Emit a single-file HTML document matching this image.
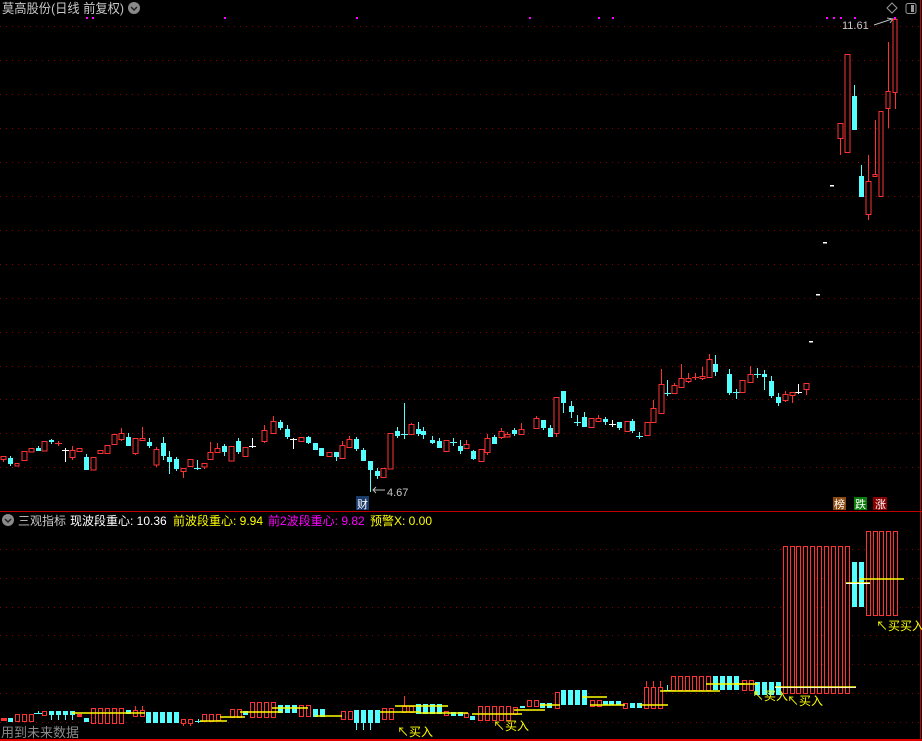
<!DOCTYPE html>
<html><head><meta charset="utf-8"><style>
html,body{margin:0;padding:0;background:#000;width:922px;height:741px;overflow:hidden}
svg{display:block}
text{font-family:"Liberation Sans","Noto Sans CJK SC",sans-serif}
.g{stroke:#8b0000;stroke-width:1;stroke-dasharray:1 5}
.R{fill:#000;stroke:#ff3232;stroke-width:1}
.RW{stroke:#ff3232;stroke-width:1;fill:none}
.C{fill:#54ffff}
.CW{stroke:#54ffff;stroke-width:1;fill:none}
.W{stroke:#fff;stroke-width:1;fill:none}
.Y{stroke:#ffff00;stroke-width:1.5}
</style></head><body>
<svg width="922" height="741" viewBox="0 0 922 741">
<g class="g">
<line x1="0" x2="920" y1="26.5" y2="26.5"/><line x1="0" x2="920" y1="60.5" y2="60.5"/><line x1="0" x2="920" y1="94.5" y2="94.5"/><line x1="0" x2="920" y1="128.5" y2="128.5"/><line x1="0" x2="920" y1="162.5" y2="162.5"/><line x1="0" x2="920" y1="196.5" y2="196.5"/><line x1="0" x2="920" y1="230.5" y2="230.5"/><line x1="0" x2="920" y1="264.5" y2="264.5"/><line x1="0" x2="920" y1="298.5" y2="298.5"/><line x1="0" x2="920" y1="332.5" y2="332.5"/><line x1="0" x2="920" y1="366.5" y2="366.5"/><line x1="0" x2="920" y1="399.5" y2="399.5"/><line x1="0" x2="920" y1="433.5" y2="433.5"/><line x1="0" x2="920" y1="467.5" y2="467.5"/>
<line x1="0" x2="920" y1="549.5" y2="549.5"/><line x1="0" x2="920" y1="578.5" y2="578.5"/><line x1="0" x2="920" y1="607.5" y2="607.5"/><line x1="0" x2="920" y1="635.5" y2="635.5"/><line x1="0" x2="920" y1="664.5" y2="664.5"/><line x1="0" x2="920" y1="693.5" y2="693.5"/><line x1="0" x2="920" y1="722.5" y2="722.5"/>
</g>
<line x1="0" x2="922" y1="511.5" y2="511.5" stroke="#c00000"/>
<line x1="0" x2="922" y1="740" y2="740" stroke="#e00000" stroke-width="2"/>
<line x1="920.5" x2="920.5" y1="0" y2="741" stroke="#c00000"/>

<text x="2" y="13" font-size="13" fill="#c8c8c8" textLength="122" lengthAdjust="spacingAndGlyphs">莫高股份(日线 前复权)</text>
<circle cx="134" cy="8" r="6" fill="#8a8a8a"/><path d="M131 7l3 3 3-3" stroke="#222" stroke-width="1.5" fill="none"/>
<g fill="#ff00ff"><rect x="86" y="17" width="2" height="2"/><rect x="92" y="17" width="2" height="2"/><rect x="224" y="17" width="2" height="2"/><rect x="356" y="17" width="2" height="2"/><rect x="529" y="17" width="2" height="2"/><rect x="598" y="17" width="2" height="2"/><rect x="612" y="17" width="2" height="2"/><rect x="826" y="17" width="2" height="2"/><rect x="833" y="17" width="2" height="2"/><rect x="840" y="17" width="2" height="2"/><rect x="854" y="17" width="2" height="2"/><rect x="894" y="17" width="2" height="2"/></g>
<path d="M892 3l5 5-5 5-5-5z" stroke="#999" fill="none"/>
<rect x="906" y="3.5" width="10" height="10" rx="2" stroke="#999" fill="none"/><rect x="911" y="5" width="3" height="7" fill="#999"/>
<text x="842" y="29" font-size="11" fill="#c8c8c8">11.61</text>
<path d="M874 25l18-6M887 18l6 1-3 4" stroke="#bbb" fill="none"/>

<path class="RW" d="M3.5 456V462M72.5 446V460M121.5 428V441M135.5 453V455M142.5 427V441M156.5 447V467M183.5 471V478M204.5 467V469M210.5 442V460M217.5 443V452M245.5 456V457M264.5 425V443M273.5 416V421M342.5 441V459M349.5 436V439M411.5 423V424M446.5 451V452M466.5 440V444M481.5 461V462M487.5 434V455M501.5 428V439M507.5 432V437M521.5 423V435M536.5 416V418M556.5 433V437M598.5 415V422M653.5 400V408M661.5 369V384M674.5 383V385M681.5 364V388M688.5 373V383M702.5 367V380M709.5 354V359M750.5 366V383M785.5 391V402M792.5 395V403M806.5 389V395M840.5 138V155M868.5 155V220M875.5 120V176M888.5 42V128M895.5 92V109M58.5 441V446M55 443.5H62M695.5 373V380M692 377.5H699"/>
<path class="CW" d="M10.5 456V466M38.5 446V451M51.5 439V444M86.5 454V457M128.5 433V446M149.5 438V448M163.5 437V460M169.5 451V474M176.5 457V471M197.5 460V470M194 468.5H201M224.5 444V456M238.5 438V454M280.5 420V430M287.5 425V439M308.5 436V444M336.5 452V461M356.5 437V451M363.5 448V461M370.5 461V492M377.5 468V479M397.5 427V438M404.5 403V439M401 434.5H408M418.5 422V436M423.5 427V439M432.5 436V444M439.5 438V448M453.5 438V446M450 442.5H457M460.5 440V454M473.5 450V460M494.5 435V444M514.5 428V436M543.5 420V430M550.5 425V437M563.5 391V413M571.5 401V418M577.5 415V426M574 422.5H581M584.5 412V427M605.5 417V425M619.5 422V430M632.5 419V433M639.5 432V439M636 436.5H643M667.5 380V396M664 393.5H671M715.5 355V376M729.5 369V395M736.5 389V399M733 392.5H740M757.5 368V378M754 374.5H761M764.5 370V390M771.5 376V398M778.5 393V406M854.5 85V96M861.5 165V176"/>
<path class="W" d="M65.5 448V462M62 450.5H69M252.5 438V448M249 446.5H256M293.5 438V449M290 439.5H297M612.5 420V427M609 424.5H616M798.5 384V394M795 392.5H802"/>
<g class="R">
<rect x="1" y="456.5" width="5" height="3"/><rect x="15" y="463.5" width="4" height="2.5"/><rect x="22" y="451.5" width="5" height="9"/><rect x="29" y="448.5" width="5" height="3.5"/><rect x="42" y="441.5" width="5" height="9.5"/><rect x="70" y="450.5" width="5" height="7"/><rect x="77" y="448.5" width="5" height="3"/><rect x="91" y="457.5" width="5" height="12.5"/><rect x="98" y="450.5" width="5" height="3"/><rect x="105" y="445.5" width="5" height="8"/><rect x="112" y="434.5" width="5" height="10"/><rect x="119" y="433.5" width="5" height="6"/><rect x="133" y="438.5" width="5" height="15"/><rect x="140" y="438.5" width="5" height="2"/><rect x="154" y="449.5" width="5" height="15.5"/><rect x="181" y="468.5" width="5" height="3"/><rect x="188" y="459.5" width="5" height="7"/><rect x="202" y="463.5" width="5" height="3.5"/><rect x="208" y="452.5" width="5" height="7"/><rect x="215" y="448.5" width="5" height="4"/><rect x="229" y="446.5" width="5" height="14.5"/><rect x="243" y="447.5" width="5" height="9"/><rect x="262" y="430.5" width="5" height="11"/><rect x="271" y="421.5" width="5" height="12"/><rect x="299" y="437.5" width="5" height="4"/><rect x="327" y="452.5" width="5" height="4"/><rect x="340" y="445.5" width="5" height="13"/><rect x="347" y="439.5" width="5" height="8"/><rect x="381" y="468.5" width="5" height="9"/><rect x="388" y="433.5" width="5" height="35.5"/><rect x="409" y="424.5" width="5" height="10"/><rect x="444" y="440.5" width="5" height="11"/><rect x="464" y="444.5" width="5" height="4"/><rect x="479" y="449.5" width="5" height="12"/><rect x="485" y="438.5" width="5" height="14"/><rect x="499" y="431.5" width="5" height="6"/><rect x="505" y="434.5" width="5" height="2.5"/><rect x="519" y="429.5" width="5" height="5"/><rect x="534" y="418.5" width="5" height="10"/><rect x="554" y="397.5" width="5" height="36"/><rect x="589" y="418.5" width="5" height="9"/><rect x="596" y="418.5" width="5" height="3"/><rect x="625" y="421.5" width="5" height="10"/><rect x="645" y="422.5" width="5" height="13"/><rect x="651" y="408.5" width="5" height="14"/><rect x="659" y="384.5" width="5" height="29"/><rect x="672" y="385.5" width="5" height="8"/><rect x="679" y="378.5" width="5" height="9"/><rect x="686" y="378.5" width="5" height="3"/><rect x="700" y="376.5" width="5" height="2"/><rect x="707" y="359.5" width="5" height="18"/><rect x="740" y="380.5" width="5" height="12"/><rect x="748" y="374.5" width="5" height="8"/><rect x="783" y="394.5" width="5" height="6"/><rect x="790" y="392.5" width="5" height="3"/><rect x="804" y="383.5" width="5" height="6"/><rect x="838" y="123.5" width="5" height="15"/><rect x="845" y="54.5" width="5" height="98"/><rect x="866" y="181.5" width="5" height="33"/><rect x="873" y="174.5" width="4" height="2"/><rect x="879" y="111.5" width="4" height="85"/><rect x="886" y="91.5" width="4" height="17"/><rect x="893" y="19.5" width="4" height="73"/>
</g>
<g class="C">
<rect x="8" y="458" width="5" height="6"/><rect x="36" y="448" width="5" height="3"/><rect x="49" y="440" width="5" height="2"/><rect x="84" y="457" width="5" height="13"/><rect x="126" y="437" width="5" height="9"/><rect x="147" y="442" width="5" height="4"/><rect x="161" y="443" width="5" height="13"/><rect x="167" y="457" width="5" height="5"/><rect x="174" y="459" width="5" height="10"/><rect x="222" y="446" width="5" height="6"/><rect x="236" y="441" width="5" height="11"/><rect x="278" y="422" width="5" height="6"/><rect x="285" y="429" width="5" height="8"/><rect x="306" y="437" width="5" height="6"/><rect x="313" y="443" width="5" height="7"/><rect x="319" y="448" width="5" height="8"/><rect x="334" y="452" width="5" height="5"/><rect x="354" y="439" width="5" height="10"/><rect x="361" y="450" width="5" height="11"/><rect x="368" y="461" width="5" height="9"/><rect x="375" y="471" width="5" height="5"/><rect x="395" y="431" width="5" height="5"/><rect x="416" y="429" width="5" height="5"/><rect x="421" y="431" width="5" height="4"/><rect x="430" y="440" width="5" height="3"/><rect x="437" y="441" width="5" height="7"/><rect x="458" y="446" width="5" height="5"/><rect x="471" y="451" width="5" height="8"/><rect x="492" y="437" width="5" height="7"/><rect x="512" y="430" width="5" height="4"/><rect x="541" y="420" width="5" height="8"/><rect x="548" y="428" width="5" height="9"/><rect x="561" y="391" width="5" height="12"/><rect x="569" y="406" width="5" height="6"/><rect x="582" y="417" width="5" height="10"/><rect x="603" y="419" width="5" height="3"/><rect x="617" y="422" width="5" height="6"/><rect x="630" y="421" width="5" height="10"/><rect x="713" y="364" width="5" height="8"/><rect x="727" y="374" width="5" height="19"/><rect x="762" y="374" width="5" height="3"/><rect x="769" y="381" width="5" height="15"/><rect x="776" y="397" width="5" height="6"/><rect x="852" y="96" width="5" height="34"/><rect x="859" y="176" width="5" height="21"/>
</g>
<g fill="#fff"><rect x="809" y="341" width="4" height="1.5"/><rect x="816" y="294" width="4" height="1.5"/><rect x="823" y="242" width="4" height="1.5"/><rect x="830" y="185" width="4" height="1.5"/></g>
<path d="M385 490H373M376 487l-3 3 3 3" stroke="#bbb" fill="none"/>
<text x="387" y="496" font-size="11" fill="#c8c8c8">4.67</text>
<rect x="356" y="496" width="13" height="14" fill="#1a3a6a"/><text x="357" y="508" font-size="11" fill="#fff">财</text>
<rect x="833" y="497" width="13" height="13" fill="#8b4a10"/><text x="834" y="508" font-size="11" fill="#fff">榜</text>
<rect x="854" y="497" width="13" height="13" fill="#0a7a0a"/><text x="855" y="508" font-size="11" fill="#fff">跌</text>
<rect x="873" y="497" width="14" height="13" fill="#8a0000"/><text x="875" y="508" font-size="11" fill="#fff">涨</text>

<circle cx="8" cy="520" r="6" fill="#8a8a8a"/><path d="M5 519l3 3 3-3" stroke="#222" stroke-width="1.5" fill="none"/>
<text y="525" font-size="12"><tspan x="18" fill="#c8c8c8">三观指标</tspan><tspan x="70" fill="#fff">现波段重心: 10.36</tspan><tspan x="173" fill="#ffff00">前波段重心: 9.94</tspan><tspan x="268" fill="#ff00ff">前2波段重心: 9.82</tspan><tspan x="370" fill="#ffff00">预警X: 0.00</tspan></text>

<g class="RW"><path d="M135.5 706V710M142.5 706V710M183.5 723V726M190.5 723V726M404.5 696V706M646.5 681V687M653.5 681V687M660.5 681V687"/></g>
<g class="CW"><path d="M51.5 715V720M58.5 715V720M65.5 715V720M72.5 715V720M38.5 711V714M34 713.5H42M198.5 719V723M195 721.5H202M667.5 685V690M664 690.5H671M363.5 723V730M356.5 723V730M370.5 723V730"/></g>
<g fill="#ff3232"><rect x="1" y="718" width="6" height="3"/><rect x="77" y="714" width="5" height="3"/></g>
<g class="R">
<rect x="15.5" y="714.5" width="4" height="7"/><rect x="22.5" y="714.5" width="4" height="7"/><rect x="29.5" y="714.5" width="4" height="7"/><rect x="42.5" y="711.5" width="4" height="4"/>
<rect x="91.5" y="708.5" width="4" height="15"/><rect x="98.5" y="708.5" width="4" height="15"/><rect x="105.5" y="708.5" width="4" height="15"/><rect x="112.5" y="708.5" width="4" height="15"/><rect x="119.5" y="708.5" width="4" height="15"/><rect x="133.5" y="710.5" width="4" height="6"/><rect x="140.5" y="710.5" width="4" height="6"/>
<rect x="181.5" y="719.5" width="4" height="4"/><rect x="188.5" y="719.5" width="4" height="4"/><rect x="202.5" y="714.5" width="4" height="7"/><rect x="209.5" y="714.5" width="4" height="7"/><rect x="216.5" y="714.5" width="4" height="6"/>
<rect x="230.5" y="709.5" width="4" height="8"/><rect x="237.5" y="709.5" width="4" height="8"/>
<rect x="250.5" y="702.5" width="4" height="15"/><rect x="257.5" y="702.5" width="4" height="15"/><rect x="264.5" y="702.5" width="4" height="15"/><rect x="271.5" y="702.5" width="4" height="15"/>
<rect x="299.5" y="705.5" width="4" height="11"/><rect x="306.5" y="705.5" width="4" height="11"/>
<rect x="341.5" y="711.5" width="4" height="8"/><rect x="348.5" y="711.5" width="4" height="8"/>
<rect x="382.5" y="708.5" width="4" height="11"/><rect x="389.5" y="708.5" width="4" height="11"/>
<rect x="402.5" y="706.5" width="4" height="6"/><rect x="409.5" y="706.5" width="4" height="6"/>
<rect x="444.5" y="711.5" width="4" height="4"/><rect x="464.5" y="713.5" width="4" height="4"/>
<rect x="478.5" y="706.5" width="4" height="14"/><rect x="485.5" y="706.5" width="4" height="14"/><rect x="492.5" y="706.5" width="4" height="14"/><rect x="499.5" y="706.5" width="4" height="14"/><rect x="506.5" y="706.5" width="4" height="14"/><rect x="513.5" y="707.5" width="4" height="7"/>
<rect x="527.5" y="700.5" width="4" height="6"/><rect x="534.5" y="700.5" width="4" height="6"/><rect x="555.5" y="692.5" width="4" height="16"/>
<rect x="590.5" y="700.5" width="4" height="6"/><rect x="597.5" y="700.5" width="4" height="6"/><rect x="623.5" y="703.5" width="4" height="5"/>
<rect x="644.5" y="687.5" width="4" height="21"/><rect x="651.5" y="687.5" width="4" height="21"/><rect x="658.5" y="687.5" width="4" height="21"/>
<rect x="671.5" y="676.5" width="4" height="14"/><rect x="678.5" y="676.5" width="4" height="14"/><rect x="685.5" y="676.5" width="4" height="14"/><rect x="692.5" y="676.5" width="4" height="14"/><rect x="699.5" y="676.5" width="4" height="14"/><rect x="706.5" y="676.5" width="4" height="14"/>
<rect x="742.5" y="680.5" width="4" height="10"/><rect x="749.5" y="680.5" width="4" height="10"/>
<rect x="783.5" y="546.5" width="4" height="147"/><rect x="790.5" y="546.5" width="4" height="147"/><rect x="796.5" y="546.5" width="4" height="147"/><rect x="803.5" y="546.5" width="4" height="147"/><rect x="810.5" y="546.5" width="4" height="147"/><rect x="817.5" y="546.5" width="4" height="147"/><rect x="824.5" y="546.5" width="4" height="147"/><rect x="831.5" y="546.5" width="4" height="147"/><rect x="838.5" y="546.5" width="4" height="147"/><rect x="845.5" y="546.5" width="4" height="147"/>
<rect x="866.5" y="531.5" width="4" height="84"/><rect x="873.5" y="531.5" width="4" height="84"/><rect x="879.5" y="531.5" width="4" height="84"/><rect x="886.5" y="531.5" width="4" height="84"/><rect x="893.5" y="531.5" width="4" height="84"/>
</g>
<g class="C">
<rect x="8" y="718" width="5" height="4"/><rect x="49" y="711" width="5" height="4"/><rect x="56" y="711" width="5" height="4"/><rect x="63" y="711" width="5" height="4"/><rect x="70" y="711" width="5" height="4"/><rect x="84" y="718" width="5" height="4"/><rect x="126" y="710" width="5" height="4"/>
<rect x="146" y="712" width="5" height="11"/><rect x="153" y="712" width="5" height="11"/><rect x="160" y="712" width="5" height="11"/><rect x="167" y="712" width="5" height="11"/><rect x="174" y="712" width="5" height="11"/>
<rect x="243" y="711" width="5" height="4"/><rect x="278" y="705" width="5" height="8"/><rect x="285" y="705" width="5" height="8"/><rect x="292" y="705" width="5" height="8"/>
<rect x="313" y="709" width="5" height="8"/><rect x="320" y="709" width="5" height="8"/>
<rect x="354" y="710" width="5" height="13"/><rect x="361" y="710" width="5" height="13"/><rect x="368" y="710" width="5" height="13"/><rect x="375" y="710" width="5" height="13"/>
<rect x="416" y="704" width="5" height="10"/><rect x="423" y="704" width="5" height="10"/><rect x="430" y="704" width="5" height="10"/><rect x="437" y="704" width="5" height="10"/>
<rect x="451" y="712" width="5" height="4"/><rect x="458" y="712" width="5" height="4"/><rect x="470" y="716" width="5" height="4"/><rect x="520" y="706" width="5" height="2"/>
<rect x="540" y="703" width="5" height="5"/><rect x="547" y="703" width="5" height="5"/>
<rect x="561" y="690" width="5" height="15"/><rect x="568" y="690" width="5" height="15"/><rect x="575" y="690" width="5" height="15"/><rect x="582" y="690" width="5" height="15"/>
<rect x="603" y="701" width="5" height="4"/><rect x="609" y="701" width="5" height="4"/><rect x="616" y="701" width="5" height="4"/><rect x="630" y="703" width="5" height="5"/><rect x="637" y="703" width="5" height="5"/>
<rect x="713" y="676" width="5" height="14"/><rect x="720" y="676" width="5" height="14"/><rect x="727" y="676" width="5" height="14"/><rect x="734" y="676" width="5" height="14"/>
<rect x="755" y="682" width="5" height="13"/><rect x="762" y="682" width="5" height="13"/><rect x="769" y="682" width="5" height="13"/><rect x="776" y="682" width="5" height="13"/>
<rect x="852" y="562" width="5" height="45"/><rect x="859" y="562" width="5" height="45"/>
</g>
<g class="Y">
<line x1="72" x2="145" y1="713" y2="713"/><line x1="200" x2="227" y1="721" y2="721"/><line x1="220" x2="245" y1="717" y2="717"/><line x1="240" x2="282" y1="712" y2="712"/><line x1="272" x2="308" y1="708" y2="708"/><line x1="315" x2="342" y1="716" y2="716"/><line x1="380" x2="420" y1="712" y2="712"/><line x1="395" x2="448" y1="706" y2="706"/><line x1="420" x2="468" y1="713" y2="713"/><line x1="472" x2="522" y1="714" y2="714"/><line x1="514" x2="545" y1="710" y2="710"/><line x1="540" x2="560" y1="705" y2="705"/><line x1="582" x2="607" y1="697" y2="697"/><line x1="590" x2="625" y1="705" y2="705"/><line x1="640" x2="668" y1="705" y2="705"/><line x1="660" x2="720" y1="691" y2="691"/><line x1="706" x2="745" y1="684" y2="684"/><line x1="735" x2="758" y1="684" y2="684"/><line x1="775" x2="856" y1="687" y2="687"/><line x1="846" x2="870" y1="583" y2="583"/><line x1="860" x2="904" y1="579" y2="579"/>
</g>
<line x1="846" x2="870" y1="583.5" y2="583.5" stroke="#fff"/>
<line x1="775" x2="856" y1="687.5" y2="687.5" stroke="#fff" stroke-width="0.8"/>
<g font-size="12" fill="#ffff00">
<text x="397" y="736">↖买入</text><text x="493" y="730">↖买入</text><text x="752" y="700">↖买入</text><text x="787" y="705">↖买入</text><text x="876" y="630">↖买买入入</text>
</g>
<text x="1" y="737" font-size="13" fill="#8a8a8a">用到未来数据</text>
</svg>
</body></html>
